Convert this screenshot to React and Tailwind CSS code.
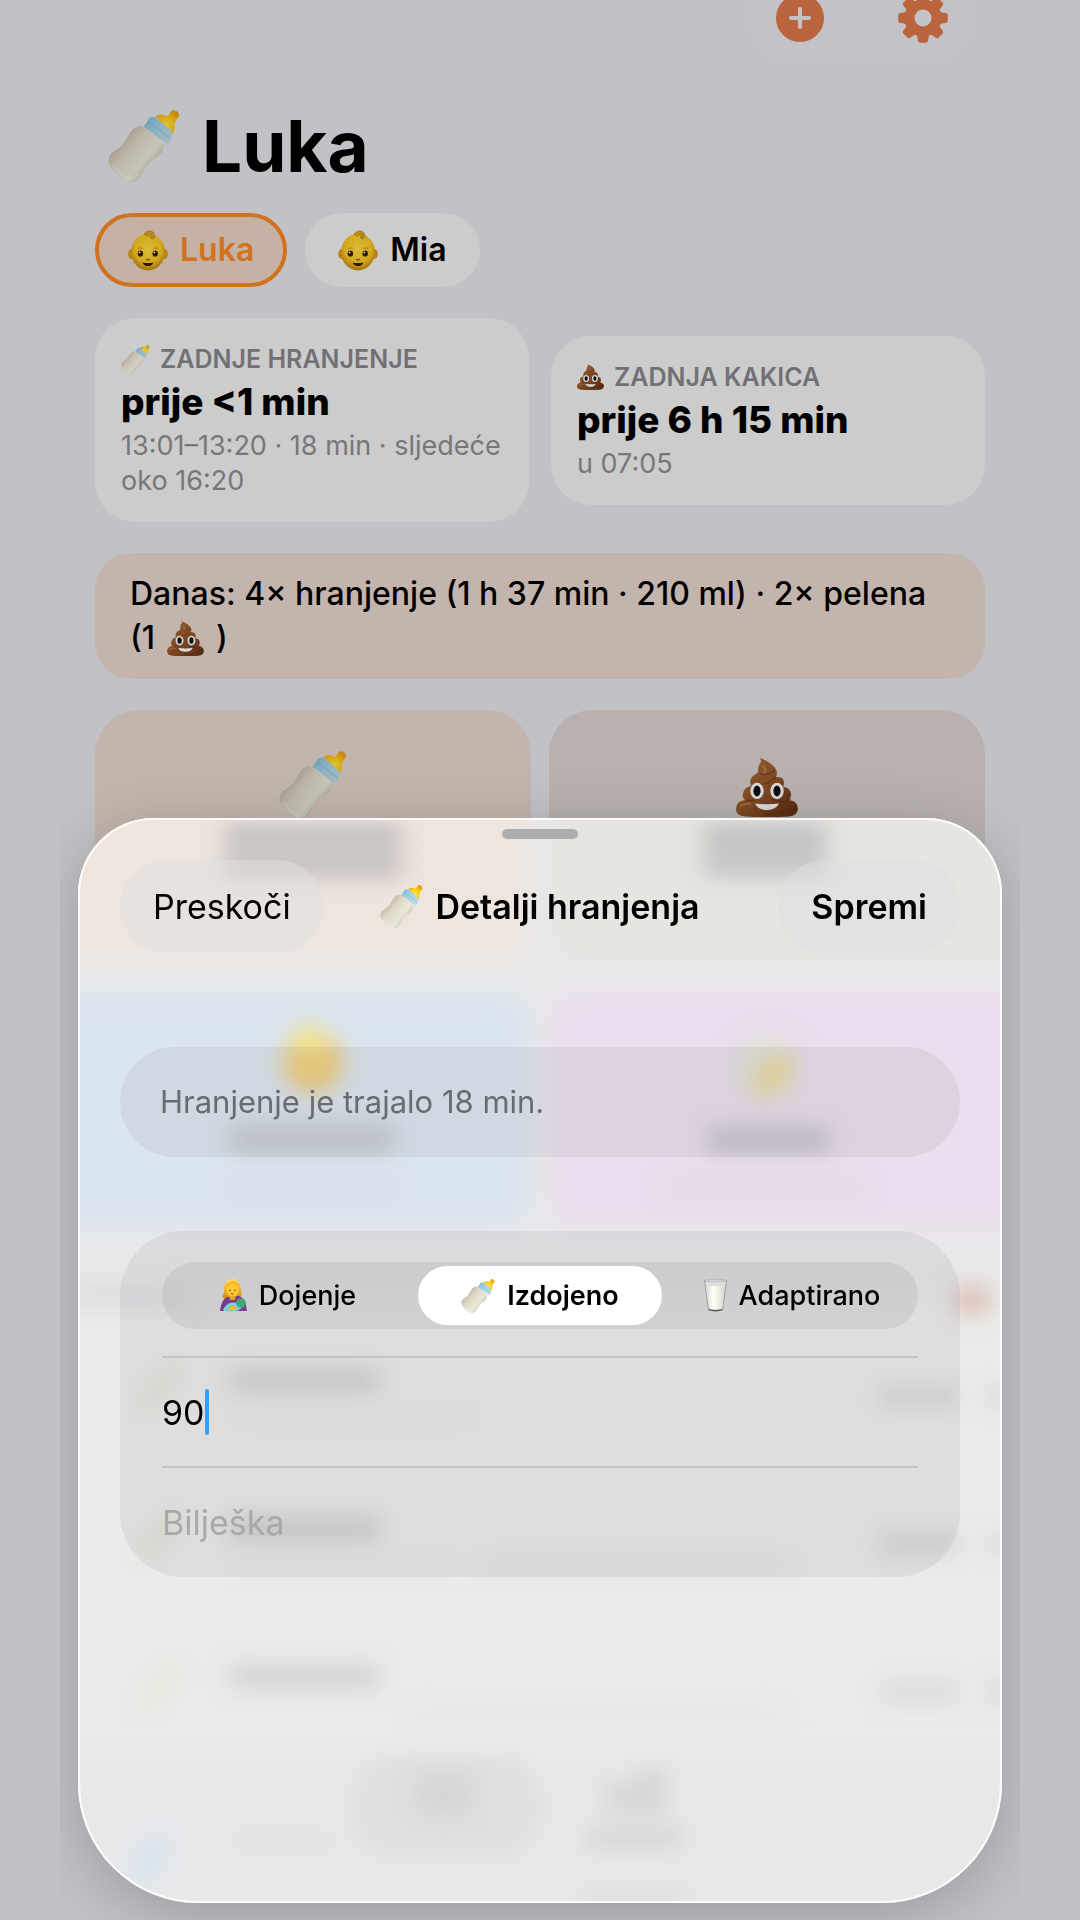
import { useState } from 'react';

// Shared gradients, referenced by id from every emoji drawing
function GradientDefs() {
  return (
    <svg className="absolute size-0" aria-hidden="true">
      <defs>
        <linearGradient id="bottle-body" x1="0.1" y1="0.2" x2="0.8" y2="0.8">
          <stop offset="0" stopColor="#b9a88f" />
          <stop offset="0.4" stopColor="#ded7c8" />
          <stop offset="0.75" stopColor="#ebe8d8" />
          <stop offset="1" stopColor="#bfb8a5" />
        </linearGradient>
        <linearGradient id="bottle-collar" x1="0" y1="0" x2="1" y2="0.8">
          <stop offset="0" stopColor="#7db8d6" />
          <stop offset="0.5" stopColor="#a5d2e6" />
          <stop offset="1" stopColor="#c2dbe4" />
        </linearGradient>
        <radialGradient id="bottle-nipple" cx="0.45" cy="0.6" r="0.6">
          <stop offset="0" stopColor="#ffe64a" />
          <stop offset="0.6" stopColor="#fcc814" />
          <stop offset="1" stopColor="#eda010" />
        </radialGradient>
        <radialGradient id="skin" cx="0.5" cy="0.4" r="0.62">
          <stop offset="0" stopColor="#ffdf3c" />
          <stop offset="0.65" stopColor="#f7c526" />
          <stop offset="1" stopColor="#b97a0c" />
        </radialGradient>
        <linearGradient id="poop" x1="0" y1="0" x2="1" y2="1">
          <stop offset="0" stopColor="#b5733c" />
          <stop offset="0.55" stopColor="#8f5227" />
          <stop offset="1" stopColor="#5f2c12" />
        </linearGradient>
        <linearGradient id="hair" x1="0" y1="0" x2="0" y2="1">
          <stop offset="0" stopColor="#ffdf70" />
          <stop offset="1" stopColor="#d08a08" />
        </linearGradient>
        <linearGradient id="milk" x1="0" y1="0" x2="1" y2="0">
          <stop offset="0" stopColor="#e2ded2" />
          <stop offset="0.4" stopColor="#fffef8" />
          <stop offset="1" stopColor="#dcd7ca" />
        </linearGradient>
      </defs>
    </svg>
  );
}

function Bottle({ className }) {
  return (
    <svg viewBox="0 0 71 72" className={className} aria-hidden="true">
      <path d="M47 6Q52 3 59 6Q61 5 62 2Q64 -1 68 1Q72 4 70 7Q67 10 66 13Q67 20 63 25Z" fill="url(#bottle-nipple)" />
      <path d="M41 8Q44 6 48 8L62 20Q65 23 63 28L60 35L35 17Z" fill="url(#bottle-collar)" />
      <path d="M39 11L62 29" stroke="#6aa9c9" strokeWidth="1" opacity=".6" />
      <path d="M31 16Q35 16 40 20L52 30Q56 33 55 38Q54 42 50 46Q41 51 35 61Q30 72 23 72Q17 72 9 64Q0 57 0 50Q1 44 6 41Q15 36 19 27Q24 17 31 16Z" fill="url(#bottle-body)" />
      <path d="M4 54Q12 65 21 69Q27 69 30 63" fill="none" stroke="#fff" strokeWidth="2" opacity=".3" />
    </svg>
  );
}

function Baby({ className }) {
  return (
    <svg viewBox="0 0 40 41" className={className} aria-hidden="true">
      <ellipse cx="3.5" cy="24" rx="3.3" ry="5" fill="#d99a14" />
      <ellipse cx="36.5" cy="24" rx="3.3" ry="5" fill="#d99a14" />
      <ellipse cx="20" cy="22" rx="17" ry="18.5" fill="url(#skin)" />
      <path d="M16 4Q20 -1 25 2Q29 6 25 9Q23 9 22 7Q25 7 24 5Q22 4 19 6Z" fill="#d8a324" stroke="#a87408" strokeWidth=".6" />
      <ellipse cx="12.4" cy="23.6" rx="2.7" ry="3" fill="#3a1d08" />
      <ellipse cx="27.2" cy="23.6" rx="2.7" ry="3" fill="#3a1d08" />
      <circle cx="11.6" cy="22.4" r="0.9" fill="#fff" />
      <circle cx="26.4" cy="22.4" r="0.9" fill="#fff" />
      <path d="M10 18.5Q12.5 17.4 15 18.4M25 18.4Q27.5 17.4 30 18.5" fill="none" stroke="#b98412" strokeWidth=".8" />
      <path d="M18 29Q20 31 22 29" fill="none" stroke="#a7660a" strokeWidth="1.2" />
      <path d="M14.5 32.4Q20 33.6 25.5 32.4Q24 36 20 36Q16 36 14.5 32.4Z" fill="#3f1a0a" />
    </svg>
  );
}

function Poop({ className }) {
  return (
    <svg viewBox="0 0 62 59" className={className} aria-hidden="true">
      <path
        d="M24 0Q38 5 41 14Q41 17 40 19Q48 18 48 25Q48 27 47 29Q54 29 55 36Q55 40 53 42Q62 43 62 51Q61 58 53 58.5Q31 60 9 58.5Q0 58 0 51Q0 43 9 42Q6 40 7 36Q8 29 15 28Q12 20 20 16Q23 14 22 11Q22 7 25 4Q25 2 24 0Z"
        fill="url(#poop)"
      />
      <path d="M24 16Q32 18 39 12M17 27Q30 28 40 19M10 42Q18 44 26 39M36 41Q46 46 55 41M28 56Q44 58 57 48" fill="none" stroke="#5d2f14" strokeWidth="1.3" opacity=".55" />
      <path d="M27 8Q31 11 28 15M5 48Q8 45 14 46" fill="none" stroke="#d29257" strokeWidth="1.8" opacity=".6" strokeLinecap="round" />
      <ellipse cx="21" cy="33" rx="6.7" ry="8.2" fill="#fff" />
      <ellipse cx="41" cy="33" rx="6.7" ry="8.2" fill="#fff" />
      <ellipse cx="21" cy="33" rx="3.6" ry="5.4" fill="#111" />
      <ellipse cx="41" cy="33" rx="3.6" ry="5.4" fill="#111" />
      <path d="M19 45.5Q31 47 43 45.5Q40 52 31 52Q22 52 19 45.5Z" fill="#fff" />
    </svg>
  );
}

function Nursing({ className }) {
  return (
    <svg viewBox="0 0 27 33" className={className} aria-hidden="true">
      <path d="M12 0Q20 0 21 9Q22 14 21 19L4 20Q1 17 4 13Q4 9 4 7Q6 0 12 0Z" fill="url(#hair)" />
      <path d="M0 32Q1 21 7 18L19 17Q26 19 27 32Z" fill="#7a3a94" />
      <path d="M9 16H16L15 21H10Z" fill="#e5a612" />
      <ellipse cx="12.5" cy="11" rx="6" ry="6.6" fill="#fcc930" />
      <path d="M6 10Q8 4 13 5Q18 5 19 10Q20 3 13 2Q6 3 6 10Z" fill="#f0b428" />
      <path d="M9 11Q10 12 11 11M14 11Q15 12 16 11M11 14.5Q12.5 16 14 14.5" fill="none" stroke="#7c4305" strokeWidth=".9" />
      <path d="M3 31Q6 24 12 23.500Q20 23 22 28Q20 32 12 32.500Q5 33 3 31Z" fill="#79d0d8" />
      <circle cx="21" cy="24" r="4.8" fill="#43a878" />
      <path d="M9 28Q14 25 17 29Q14 32 10 31Z" fill="#f5b925" />
    </svg>
  );
}

function MilkGlass({ className }) {
  return (
    <svg viewBox="0 0 23 33" className={className} aria-hidden="true">
      <path d="M.6 1.5L4.5 31Q11.5 33.5 18.5 31L22.4 1.5Z" fill="#e4e5e7" fillOpacity=".7" stroke="#8d8f94" strokeWidth=".8" />
      <path d="M2.5 8Q11.5 5.5 20.5 8L18 29Q11.5 31 5 29Z" fill="url(#milk)" />
      <ellipse cx="11.5" cy="1.6" rx="10.9" ry="1.2" fill="#d5d6d9" stroke="#a2a4a8" strokeWidth=".5" />
      <path d="M4.6 30.5Q11.5 32.8 18.4 30.5" fill="none" stroke="#55575c" strokeWidth="1.1" />
    </svg>
  );
}

function PlusIcon() {
  return (
    <svg viewBox="-25 -25 50 50" className="size-[50px]" aria-hidden="true">
      <circle r="24" fill="#bb653f" />
      <path d="M-9 0H9M0 -9V9" stroke="#c4c4c7" strokeWidth="4" strokeLinecap="round" />
    </svg>
  );
}

function GearIcon() {
  return (
    <svg viewBox="-25 -25 50 50" className="size-[50px]" aria-hidden="true">
      <circle r="13.5" fill="none" stroke="#bb653f" strokeWidth="10" />
      {[0, 45, 90, 135, 180, 225, 270, 315].map((angle) => (
        <path
          key={angle}
          d="M-8 -16Q-6 -17 -5.6 -19L-5 -23Q-4.5 -24.8 -3 -24.8H3Q4.5 -24.8 5 -23L5.6 -19Q6 -17 8 -16Z"
          fill="#bb653f"
          transform={`rotate(${angle})`}
        />
      ))}
    </svg>
  );
}

const children = ['Luka', 'Mia'];

const feedTypes = [
  { id: 'dojenje', label: 'Dojenje', icon: Nursing, iconClass: 'h-[33px] w-[27px]' },
  { id: 'izdojeno', label: 'Izdojeno', icon: Bottle, iconClass: 'size-[34px]' },
  { id: 'adaptirano', label: 'Adaptirano', icon: MilkGlass, iconClass: 'h-[33px] w-[23px]' },
];

function StatCard({ icon, label, value, detail }) {
  return (
    <section className="rounded-[40px] bg-[#cccccc] px-[26px] py-6">
      <div className="flex items-center gap-[10px] text-[25px] leading-[34px] font-semibold text-[#717175]">
        {icon}
        <h2>{label}</h2>
      </div>
      <p className="mt-1 text-[37px] leading-[44px] font-extrabold">{value}</p>
      <p className="mt-1 text-[27px] leading-[35px] text-[#77777a]">{detail}</p>
    </section>
  );
}

// Page content as it shows through the frosted sheet
function FrostedBackdrop() {
  return (
    <svg
      viewBox="0 0 925 1084"
      preserveAspectRatio="none"
      className="absolute inset-0 size-full"
      aria-hidden="true"
    >
      <defs>
        <filter id="soft" x="-30%" y="-60%" width="160%" height="220%">
          <feGaussianBlur stdDeviation="11" />
        </filter>
        <filter id="tile-soft" x="-20%" y="-20%" width="140%" height="140%">
          <feGaussianBlur stdDeviation="11" />
        </filter>
      </defs>
      <rect width="925" height="420" fill="#e8e8ea" />
      <rect y="420" width="925" height="664" fill="#ebebeb" />
      <g filter="url(#tile-soft)">
        <rect x="-60" y="-60" width="512" height="205" rx="30" fill="#eee5df" />
        <rect x="472" y="-60" width="520" height="205" rx="30" fill="#e6e5e2" />
        <rect x="-60" y="173" width="514" height="238" rx="30" fill="#dbe5ef" />
        <rect x="472" y="173" width="520" height="238" rx="30" fill="#ebdeee" />
        <rect x="-40" y="412" width="1005" height="70" fill="#e8e8ea" />
        <rect x="-40" y="930" width="1005" height="180" fill="#e8e8ea" />
        <rect x="272" y="935" width="194" height="105" rx="50" fill="#e0e0e2" />
      </g>
      <g filter="url(#soft)">
        <rect x="146" y="8" width="178" height="16" fill="#b9b5b4" />
        <rect x="146" y="24" width="178" height="18" fill="#d8d2ce" />
        <rect x="146" y="40" width="178" height="18" fill="#bdb8b6" />
        <rect x="627" y="8" width="122" height="16" fill="#b9b8b7" />
        <rect x="627" y="24" width="122" height="18" fill="#cfcecd" />
        <rect x="627" y="40" width="122" height="16" fill="#bdbcbb" />
        <circle cx="235" cy="244" r="30" fill="#efca72" />
        <circle cx="231" cy="224" r="18" fill="#f3e18c" />
        <ellipse cx="690" cy="252" rx="32" ry="34" fill="#dfe3d6" />
        <ellipse cx="696" cy="256" rx="26" ry="13" fill="#ecd68c" transform="rotate(-45 696 256)" />
        <rect x="152" y="306" width="164" height="28" fill="#c2c7cc" />
        <rect x="630" y="308" width="122" height="26" fill="#c5bfc8" />
        <rect x="592" y="362" width="190" height="16" fill="#e2d9e6" />
        <rect x="150" y="362" width="170" height="18" fill="#d7deea" />
        <rect x="-10" y="470" width="116" height="16" fill="#dadadd" />
        <rect x="878" y="468" width="34" height="28" fill="#dcbfb3" />
        <rect x="152" y="550" width="150" height="24" fill="#cfcfcf" />
        <rect x="152" y="698" width="150" height="24" fill="#cdcdcd" />
        <rect x="152" y="846" width="150" height="24" fill="#d3d3d3" />
        <rect x="152" y="592" width="250" height="14" fill="#e8e8e8" />
        <rect x="400" y="738" width="316" height="15" fill="#e3e3e3" />
        <rect x="152" y="738" width="230" height="14" fill="#e7e7e7" />
        <rect x="330" y="888" width="380" height="18" fill="#e6e6e6" />
        <rect x="802" y="568" width="80" height="20" fill="#d7d7d7" />
        <rect x="802" y="714" width="80" height="22" fill="#d5d5d5" />
        <rect x="804" y="862" width="76" height="22" fill="#dbdbdb" />
        <rect x="910" y="568" width="20" height="20" fill="#d7d7d7" />
        <rect x="910" y="714" width="20" height="20" fill="#d7d7d7" />
        <rect x="910" y="862" width="20" height="22" fill="#d7d7d7" />
        <ellipse cx="82" cy="568" rx="32" ry="9" fill="#e2e1d0" transform="rotate(-50 82 568)" />
        <ellipse cx="82" cy="716" rx="32" ry="9" fill="#e2e1d0" transform="rotate(-50 82 716)" />
        <ellipse cx="82" cy="868" rx="32" ry="8" fill="#e4e3d3" transform="rotate(-50 82 868)" />
        <ellipse cx="72" cy="1040" rx="30" ry="13" fill="#d6e4f0" transform="rotate(-60 72 1040)" />
        <rect x="152" y="1014" width="104" height="16" fill="#e2e2e3" />
        <rect x="340" y="954" width="54" height="42" fill="#d5d5d6" />
        <rect x="526" y="962" width="34" height="34" fill="#d8d8d9" />
        <rect x="560" y="950" width="28" height="46" fill="#d5d5d6" />
        <rect x="508" y="1010" width="98" height="18" fill="#d3d3d4" />
        <rect x="508" y="1076" width="98" height="6" fill="#cacacb" />
      </g>
    </svg>
  );
}

function FeedSheet() {
  const [type, setType] = useState('izdojeno');
  const [amount, setAmount] = useState('90');
  const [note, setNote] = useState('');

  return (
    <div
      role="dialog"
      aria-labelledby="sheet-title"
      className="relative overflow-hidden rounded-t-[76px] rounded-b-[120px] bg-[#e8e8ea] shadow-[0_12px_60px_rgba(0,0,0,0.2)]"
    >
      <FrostedBackdrop />
      <div className="relative rounded-t-[76px] rounded-b-[120px] border-2 border-white/90 px-10 pt-[9px] pb-[324px]">
        <div className="mx-auto h-[10px] w-[76px] rounded-full bg-[#adadad]" />

        <header className="mt-[21px] grid grid-cols-[1fr_auto_1fr] items-center text-[34px] leading-[44px]">
          <button
            type="button"
            className="h-[93px] justify-self-start rounded-full bg-[#dfdfdd]/50 px-[33px]"
          >
            Preskoči
          </button>
          <h2 id="sheet-title" className="flex items-center gap-3 font-semibold">
            <Bottle className="size-[43px]" />
            Detalji hranjenja
          </h2>
          <button
            type="button"
            className="h-[93px] justify-self-end rounded-full bg-[#dfdfe0]/50 px-[33px] font-semibold"
          >
            Spremi
          </button>
        </header>

        <p className="mt-[94px] rounded-full bg-[#767680]/11 px-10 py-[33px] text-[31px] leading-[44px] text-[#686c70]">
          Hranjenje je trajalo 18 min.
        </p>

        <form className="mt-[74px] rounded-[64px] bg-[#767680]/11 px-[42px] pt-[31px]">
          <fieldset
            aria-label="Vrsta hranjenja"
            className="grid h-[67px] grid-cols-3 gap-2 rounded-full bg-[#767680]/15 p-1"
          >
            {feedTypes.map((item) => {
              const Icon = item.icon;
              return (
                <label
                  key={item.id}
                  className="relative flex items-center justify-center gap-3 rounded-full text-[27px] leading-8 font-medium has-[:checked]:bg-white has-[:checked]:font-semibold"
                >
                  <input
                    type="radio"
                    name="feed-type"
                    className="sr-only"
                    checked={type === item.id}
                    onChange={() => setType(item.id)}
                  />
                  <Icon className={item.iconClass} />
                  {item.label}
                </label>
              );
            })}
          </fieldset>

          <div className="mt-[27px] flex h-[110px] items-center border-t-2 border-[#c4c4c7] text-[34px]">
            <input
              type="text"
              inputMode="numeric"
              aria-label="Količina"
              value={amount}
              onChange={(e) => setAmount(e.target.value)}
              className="field-sizing-content bg-transparent outline-none"
            />
            <span className="h-[46px] w-1 rounded-full bg-[#3b9cf5]" />
          </div>

          <div className="flex h-[111px] items-center border-t-2 border-[#c4c4c7] text-[34px]">
            <input
              type="text"
              aria-label="Bilješka"
              placeholder="Bilješka"
              value={note}
              onChange={(e) => setNote(e.target.value)}
              className="w-full bg-transparent outline-none placeholder:text-[#a9a9aa]"
            />
          </div>
        </form>
      </div>
    </div>
  );
}

export default function App() {
  const [active, setActive] = useState('Luka');

  return (
    <div className="relative min-h-screen overflow-hidden bg-[#c2c1c6] font-[Inter,'Noto_Sans',sans-serif] text-black">
      <GradientDefs />

      <main className="px-[95px]">
        <div className="-mt-[30px] mr-[9px] ml-auto flex h-[95px] w-fit items-center gap-[73px] rounded-full bg-[#c3c3c7] px-[28px]">
          <button type="button" aria-label="Dodaj">
            <PlusIcon />
          </button>
          <button type="button" aria-label="Postavke">
            <GearIcon />
          </button>
        </div>

        <h1 className="mt-[37px] flex items-center gap-[22px] px-[13px] text-[71px] leading-[88px] font-bold">
          <Bottle className="size-[72px] brightness-85" />
          Luka
        </h1>

        <div className="mt-[23px] flex gap-[18px]">
          {children.map((name) => (
            <button
              key={name}
              type="button"
              aria-pressed={active === name}
              onClick={() => setActive(name)}
              className={`flex h-[74px] items-center gap-3 rounded-full border-4 px-[29px] text-[32px] font-semibold ${
                active === name
                  ? 'border-[#d07220] bg-[#c5b2a5] text-[#d07220]'
                  : 'border-[#cccccc] bg-[#cccccc] text-black'
              }`}
            >
              <Baby className="h-[41px] w-10 brightness-85" />
              {name}
            </button>
          ))}
        </div>

        <div className="mt-[31px] grid grid-cols-2 items-center gap-[22px]">
          <StatCard
            icon={<Bottle className="size-[29px] brightness-90" />}
            label="ZADNJE HRANJENJE"
            value="prije <1 min"
            detail="13:01–13:20 · 18 min · sljedeće oko 16:20"
          />
          <StatCard
            icon={<Poop className="h-[26px] w-[27px] brightness-85" />}
            label="ZADNJA KAKICA"
            value="prije 6 h 15 min"
            detail="u 07:05"
          />
        </div>

        <p className="mt-[31px] rounded-[36px] bg-[#c3b5ad] px-[35px] py-[19px] text-[32px] leading-[44px] font-medium">
          Danas: 4× hranjenje (1 h 37 min · 210 ml) · 2× pelena{' '}
          <span className="inline-flex items-center gap-3">
            <span>(1</span>
            <Poop className="h-[35px] w-[37px] brightness-85" />
            <span>)</span>
          </span>
        </p>

        <div className="mt-[31px] grid grid-cols-2 gap-[18px]">
          <button
            type="button"
            aria-label="Hranjenje"
            className="flex h-[250px] justify-center rounded-[44px] bg-[#c3b5ad] pt-[41px]"
          >
            <Bottle className="size-[68px] brightness-85" />
          </button>
          <button
            type="button"
            aria-label="Pelena"
            className="flex h-[250px] justify-center rounded-[44px] bg-[#b8b1b0] pt-[48px]"
          >
            <Poop className="h-[59px] w-[62px] brightness-85" />
          </button>
        </div>
      </main>

      {/* The sheet floats over the page; its shadow is cut at the column's sides */}
      <div className="absolute inset-x-[60px] top-[718px] bottom-0 overflow-hidden px-[18px] pt-[100px]">
        <FeedSheet />
      </div>
    </div>
  );
}
